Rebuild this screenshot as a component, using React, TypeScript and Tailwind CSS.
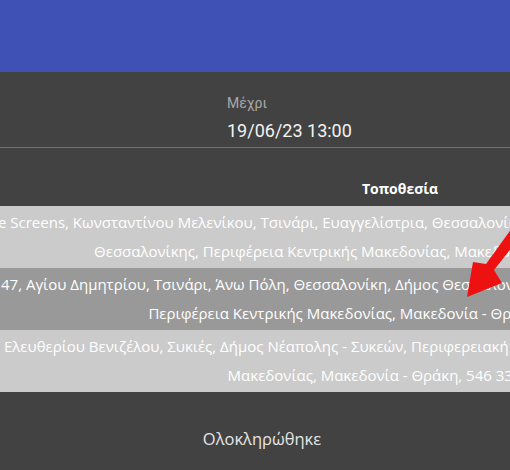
import React from "react";

const rows = [
  {
    bg: "bg-[#cbcbcb]",
    l1: "e Screens, Κωνσταντίνου Μελενίκου, Τσινάρι, Ευαγγελίστρια, Θεσσαλονίκη, Δήμος",
    l1pad: "-ml-[2px]",
    l2: "Θεσσαλονίκης, Περιφέρεια Κεντρικής Μακεδονίας, Μακεδονία - Θράκη, 546 22, Ελλάδα",
  },
  {
    bg: "bg-[#999999]",
    l1: "47, Αγίου Δημητρίου, Τσινάρι, Άνω Πόλη, Θεσσαλονίκη, Δήμος Θεσσαλονίκης,",
    l1pad: "pl-[1px]",
    l2: "Περιφέρεια Κεντρικής Μακεδονίας, Μακεδονία - Θράκη, 546 33, Ελλάδα",
  },
  {
    bg: "bg-[#cbcbcb]",
    l1: "Ελευθερίου Βενιζέλου, Συκιές, Δήμος Νέαπολης - Συκεών, Περιφερειακή Ενότητα Θεσσαλονίκης,",
    l1pad: "pl-[4px]",
    l2: "Μακεδονίας, Μακεδονία - Θράκη, 546 33, Ελλάδα",
  },
];

export default function App() {
  return (
    <div className="relative w-[510px] h-[470px] overflow-hidden bg-[#424242]">
      <div className="h-[72px] bg-[#3f51b5]" />

      <div className="flex pt-[23px] font-['Roboto',sans-serif]">
        <div className="w-[222px] border-b border-[#707070]" />
        <div className="flex-1 border-b border-[#707070] pl-[5px] pb-[4px]">
          <div className="text-[14px] leading-[16px] text-[#a9a9a9]">Μέχρι</div>
          <div className="mt-[8px] text-[18px] leading-[24px] text-[#f2f2f2]">19/06/23 13:00</div>
        </div>
      </div>

      <div className="mt-[22px] font-['Open_Sans',sans-serif] text-white">
        <div className="w-[800px] h-[36px] flex items-center justify-center font-bold text-[14px]">
          Τοποθεσία
        </div>
        {rows.map((r, i) => (
          <div key={i} className={`w-[800px] h-[62px] py-[2px] text-[15px] ${r.bg}`}>
            <div className={`whitespace-nowrap leading-[29px] ${r.l1pad}`}>{r.l1}</div>
            <div className="whitespace-nowrap leading-[29px] flex justify-center">{r.l2}</div>
          </div>
        ))}
      </div>

      <div className="h-[78px] pt-[17px] flex items-center justify-center pl-[14px] font-['Open_Sans',sans-serif] text-[16.5px] text-[#e6e6e6]">
        Ολοκληρώθηκε
      </div>

      <svg
        className="absolute left-[440px] top-[215px]"
        width="70"
        height="90"
        viewBox="440 215 70 90"
      >
        <polygon
          points="512,228 520,237 494,270 502,283 467,297 473,262 486,264"
          fill="#ee1111"
        />
      </svg>
    </div>
  );
}
